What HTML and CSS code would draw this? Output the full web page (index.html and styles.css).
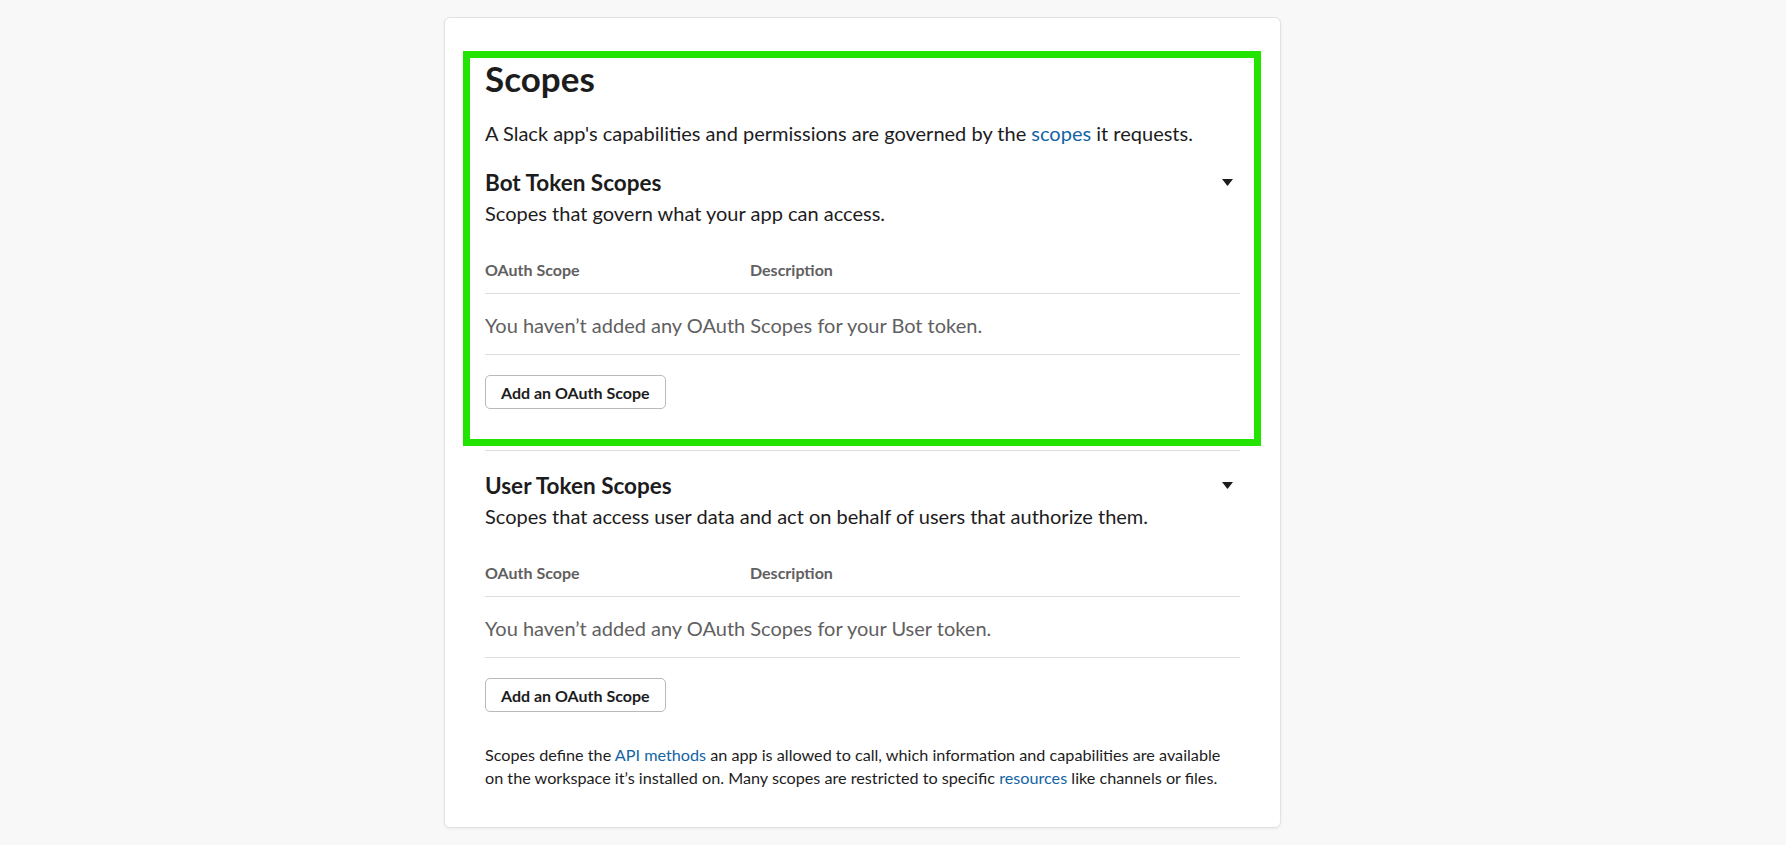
FILE: index.html
```html
<!DOCTYPE html>
<html lang="en">
<head>
    <meta charset="UTF-8">
    <meta name="viewport" content="width=device-width, initial-scale=1.0">
    <title>Scopes</title>
    <link rel="stylesheet" href="styles.css">
</head>
<body>
    <div class="page">
        <div class="card">
            <div class="highlight"></div>
            <h1 class="title">Scopes</h1>
            <p class="lead">A Slack app's capabilities and permissions are governed by the <a href="#">scopes</a> it requests.</p>

            <div class="section">
                <div class="section-head">
                    <h2 class="section-title">Bot Token Scopes</h2>
                    <svg class="caret" width="11" height="7" viewBox="0 0 11 7"><path d="M0 0h11L5.5 7z" fill="#1d1c1d"/></svg>
                </div>
                <p class="section-sub">Scopes that govern what your app can access.</p>
                <div class="table">
                    <div class="table-head">
                        <span class="col-scope">OAuth Scope</span>
                        <span>Description</span>
                    </div>
                    <div class="table-empty">You haven’t added any OAuth Scopes for your Bot token.</div>
                </div>
                <button class="btn">Add an OAuth Scope</button>
            </div>

            <div class="section last">
                <div class="section-head">
                    <h2 class="section-title">User Token Scopes</h2>
                    <svg class="caret" width="11" height="7" viewBox="0 0 11 7"><path d="M0 0h11L5.5 7z" fill="#1d1c1d"/></svg>
                </div>
                <p class="section-sub">Scopes that access user data and act on behalf of users that authorize them.</p>
                <div class="table">
                    <div class="table-head">
                        <span class="col-scope">OAuth Scope</span>
                        <span>Description</span>
                    </div>
                    <div class="table-empty">You haven’t added any OAuth Scopes for your User token.</div>
                </div>
                <button class="btn">Add an OAuth Scope</button>
            </div>

            <p class="note">Scopes define the <a href="#">API methods</a> an app is allowed to call, which information and capabilities are available on the workspace it’s installed on. Many scopes are restricted to specific <a href="#">resources</a> like channels or files.</p>
        </div>
    </div>
</body>
</html>
```

FILE: styles.css
```css
*{
    margin: 0;
    padding: 0;
    box-sizing: border-box;
}
body{
    background: #f8f8f8;
    font-family: Lato, "Noto Sans", sans-serif;
    color: #1d1c1d;
}
a{
    color: #1264a3;
    text-decoration: none;
}
.page{
    padding: 17px 0 17px 444px;
}
.card{
    position: relative;
    width: 837px;
    background: #fff;
    border: 1px solid #e2e2e2;
    border-radius: 6px;
    box-shadow: 0 1px 3px rgba(0,0,0,0.06);
    padding: 39px 40px 38px 40px;
}
.highlight{
    position: absolute;
    left: 18px;
    top: 33px;
    width: 798px;
    height: 395px;
    border: 7px solid #22e400;
    pointer-events: none;
}
.title{
    font-size: 35px;
    font-weight: 700;
    line-height: 42px;
}
.lead{
    font-size: 20px;
    line-height: 27px;
    margin-top: 21px;
}
.section{
    padding: 22px 0 41px;
}
.section + .section{
    border-top: 1px solid #ddd;
    padding-top: 21px;
}
.section.last{
    padding-bottom: 31px;
}
.section-head{
    display: flex;
    align-items: center;
    justify-content: space-between;
}
.section-title{
    font-size: 22.5px;
    font-weight: 700;
    line-height: 27px;
}
.caret{
    margin-right: 7px;
}
.section-sub{
    font-size: 20px;
    line-height: 27px;
    margin-top: 4px;
}
.table{
    margin-top: 33px;
}
.table-head{
    display: flex;
    font-size: 16px;
    font-weight: 700;
    line-height: 20px;
    color: #616061;
    padding-bottom: 13px;
    border-bottom: 1px solid #ddd;
}
.col-scope{
    width: 265px;
}
.table-empty{
    font-size: 20px;
    line-height: 28px;
    color: #616061;
    padding: 17px 0 15px;
    border-bottom: 1px solid #ddd;
}
.btn{
    margin-top: 20px;
    height: 34px;
    padding: 0 15px;
    font-family: Lato, "Noto Sans", sans-serif;
    font-size: 16px;
    font-weight: 700;
    color: #1d1c1d;
    background: #fff;
    border: 1px solid #bbbabb;
    border-radius: 5px;
    cursor: pointer;
}
.note{
    max-width: 745px;
    font-size: 16.2px;
    line-height: 23px;
}
```
